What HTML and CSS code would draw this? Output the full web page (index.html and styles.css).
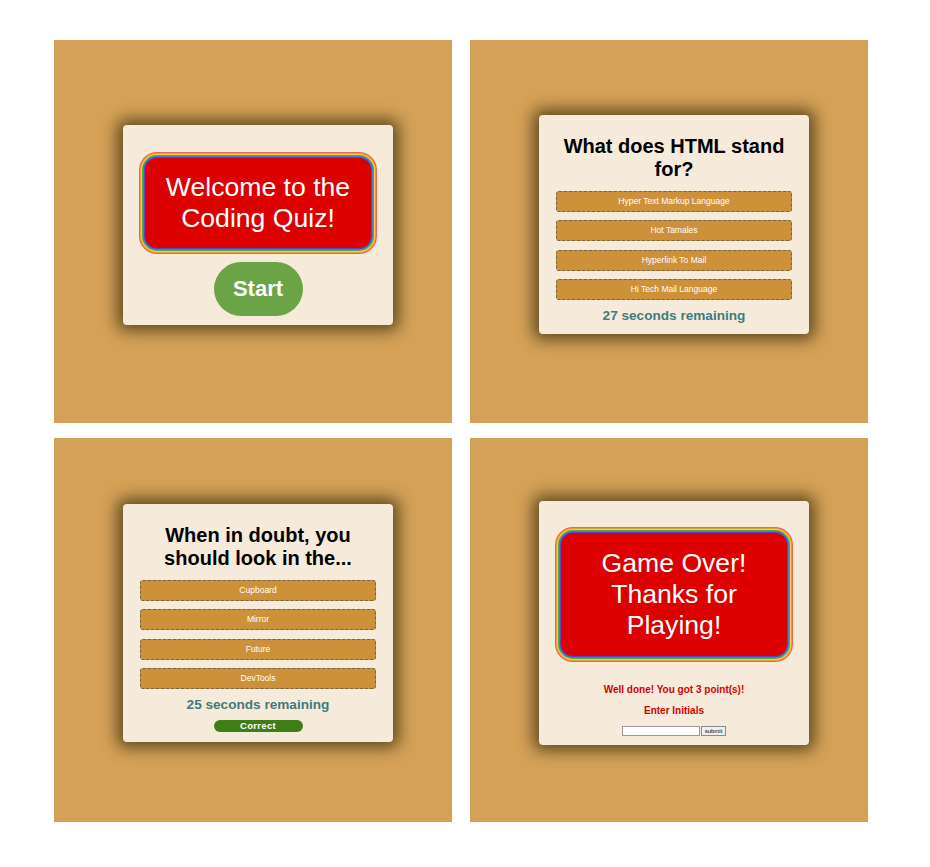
FILE: index.html
```html
<!DOCTYPE html>
<html>
<head>
<meta charset="utf-8">
<title>Coding Quiz</title>
<link rel="stylesheet" href="styles.css">
</head>
<body>
<div class="grid">
  <div class="panel">
    <div class="card card-start">
      <div class="banner">Welcome to the Coding Quiz!</div>
      <button class="start-btn">Start</button>
    </div>
  </div>
  <div class="panel">
    <div class="card card-quiz">
      <h2 class="question">What does HTML stand for?</h2>
      <div class="options">
        <button class="option">Hyper Text Markup Language</button>
        <button class="option">Hot Tamales</button>
        <button class="option">Hyperlink To Mail</button>
        <button class="option">Hi Tech Mail Language</button>
      </div>
      <div class="timer">27 seconds remaining</div>
    </div>
  </div>
  <div class="panel">
    <div class="card card-quiz">
      <h2 class="question">When in doubt, you should look in the...</h2>
      <div class="options">
        <button class="option">Cupboard</button>
        <button class="option">Mirror</button>
        <button class="option">Future</button>
        <button class="option">DevTools</button>
      </div>
      <div class="timer">25 seconds remaining</div>
      <div class="feedback">Correct</div>
    </div>
  </div>
  <div class="panel">
    <div class="card card-end">
      <div class="banner banner-lg">Game Over! Thanks for Playing!</div>
      <p class="result">Well done! You got 3 point(s)!</p>
      <p class="result result-label">Enter Initials</p>
      <form class="initials">
        <input class="initials-input" type="text">
        <button class="initials-submit" type="button">submit</button>
      </form>
    </div>
  </div>
</div>
</body>
</html>
```
FILE: styles.css
```css
html, body {
  margin: 0;
  padding: 0;
  background: #ffffff;
}

.grid {
  display: grid;
  grid-template-columns: 398px 398px;
  grid-template-rows: 383px 384px;
  column-gap: 18px;
  row-gap: 15px;
  padding: 40px 0 0 54px;
}

.panel {
  background: #d4a157;
  display: flex;
  align-items: center;
  justify-content: center;
  padding: 0 0 14px 10px;
  box-sizing: border-box;
}

.card {
  width: 270px;
  box-sizing: border-box;
  background: #f6ebdb;
  border-radius: 4px;
  text-align: center;
  font-family: "Liberation Sans", Arial, sans-serif;
  box-shadow: 0 0 15px 6px rgba(70, 55, 20, 0.8);
}

.card-start {
  padding: 27px 16px 9px;
}

.banner {
  margin: 6px;
  background: #dc0000;
  color: #ffffff;
  border-radius: 12px;
  font-size: 26.6px;
  line-height: 31px;
  padding: 14px 10px;
  box-shadow:
    0 0 0 1px #6040c8,
    0 0 0 2px #3b7fe0,
    0 0 0 3px #4cae4c,
    0 0 0 4px #f4d42c,
    0 0 0 5px #f39a30,
    0 0 0 6px #e7655c;
}

.banner-lg {
  padding: 15px 10px;
}

.start-btn {
  display: block;
  margin: 14px auto 0;
  width: 89px;
  height: 54px;
  border: none;
  border-radius: 27px;
  background: #6aa446;
  color: #ffffff;
  font-family: "Liberation Sans", Arial, sans-serif;
  font-weight: bold;
  font-size: 22px;
  padding: 0;
}

.card-quiz {
  padding: 20px 17px 10px;
}

.question {
  margin: 0 0 10px;
  font-size: 20px;
  line-height: 23px;
  font-weight: bold;
  color: #000000;
}

.options {
  display: flex;
  flex-direction: column;
  gap: 8.6px;
}

.option {
  height: 21px;
  box-sizing: border-box;
  background: #cd913a;
  border: 1px dashed #6e6450;
  border-radius: 3px;
  color: #ffffff;
  font-family: "Liberation Sans", Arial, sans-serif;
  font-size: 8.5px;
  line-height: 19px;
  padding: 0;
}

.timer {
  margin-top: 8px;
  font-size: 13.6px;
  line-height: 16px;
  font-weight: bold;
  color: #3e7b7c;
}

.feedback {
  width: 89px;
  height: 12px;
  margin: 7px auto 0;
  background: #3f7d17;
  border-radius: 6px;
  color: #ffffff;
  font-size: 9.5px;
  line-height: 12px;
  font-weight: bold;
  letter-spacing: 0.3px;
}

.card-end {
  padding: 26px 16px 9px;
}

.result {
  margin: 28px 0 0;
  font-size: 10px;
  line-height: 12px;
  font-weight: bold;
  color: #d40000;
}

.result-label {
  margin-top: 9px;
}

.initials {
  margin: 9.5px 0 0;
  display: flex;
  justify-content: center;
  gap: 1px;
  height: 10px;
}

.initials-input {
  width: 78px;
  height: 10px;
  box-sizing: border-box;
  border: 1px solid #9a9a9a;
  background: #ffffff;
  padding: 0;
  margin: 0;
}

.initials-submit {
  width: 25px;
  height: 10px;
  box-sizing: border-box;
  border: 1px solid #8a8a8a;
  background: #efefef;
  font-family: "Liberation Sans", Arial, sans-serif;
  font-size: 6px;
  line-height: 8px;
  padding: 0;
  margin: 0;
  color: #000000;
}
```
